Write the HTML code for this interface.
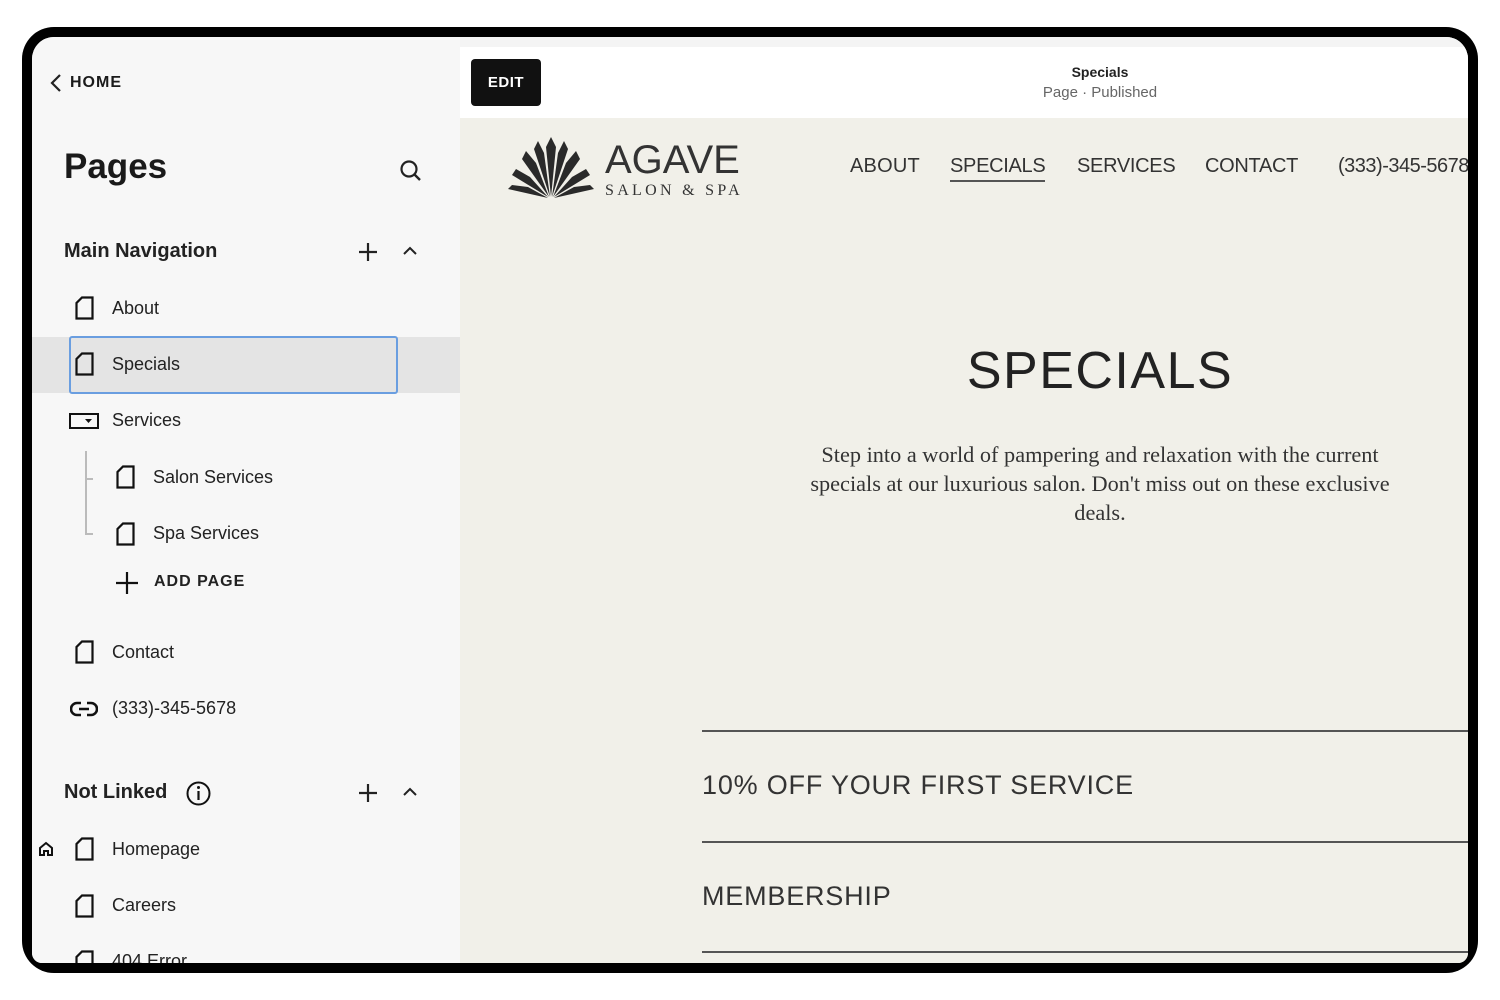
<!DOCTYPE html>
<html><head><meta charset="utf-8"><style>
*{margin:0;padding:0;box-sizing:border-box}
body{width:1500px;height:1000px;background:#fff;position:relative;overflow:hidden;font-family:"Liberation Sans",sans-serif;color:#1a1a1a}
.frame{position:absolute;left:22px;top:27px;width:1456px;height:946px;background:#000;border-radius:32px}
.inner{position:absolute;left:32px;top:37px;width:1436px;height:926px;border-radius:22px 22px 10px 10px;overflow:hidden;background:#f7f7f7}
.side{position:absolute;left:0;top:0;width:428px;height:926px;background:#f7f7f7}
.a{position:absolute;white-space:nowrap}
.item{font-size:18px;color:#222}
.right{position:absolute;left:428px;top:0;width:1008px;height:926px;background:#f1f0e9;overflow:hidden}
.top{position:absolute;left:0;top:10px;width:1008px;height:71px;background:#fff}
.pre{position:absolute;left:0;top:0;width:1008px;height:10px;background:#f4f4f4}
.line{position:absolute;left:242px;width:780px;height:2px;background:#555}
.acc{position:absolute;left:242px;font-size:27px;letter-spacing:0.8px;color:#333;white-space:nowrap}
.nav{position:absolute;top:118px;font-size:20px;color:#333;letter-spacing:.2px;white-space:nowrap}
</style></head><body>
<div class="frame"></div>
<div class="inner">
<div class="side">
 <svg class="a" style="left:17px;top:36px" width="14" height="20" viewBox="0 0 14 20"><path d="M11 2 L3 10 L11 18" fill="none" stroke="#222" stroke-width="2.2"/></svg>
 <div class="a" style="left:38px;top:37px;font-size:16px;font-weight:bold;letter-spacing:1px">HOME</div>
 <div class="a" style="left:32px;top:110px;font-size:35px;font-weight:bold">Pages</div>
 <svg class="a" style="left:367px;top:122px" width="24" height="24" viewBox="0 0 24 24"><circle cx="10" cy="10" r="7.5" fill="none" stroke="#222" stroke-width="2.2"/><path d="M15.5 15.5 L21 21" stroke="#222" stroke-width="2.4"/></svg>
 <div class="a" style="left:32px;top:203px;font-size:20px;font-weight:bold;color:#222">Main Navigation</div>
 <svg class="a" style="left:326px;top:205px" width="20" height="20"><path d="M10 1V19M1 10H19" stroke="#222" stroke-width="2.2"/></svg>
 <svg class="a" style="left:371px;top:209px" width="14" height="10"><path d="M1 8 L7 2 L13 8" fill="none" stroke="#222" stroke-width="2"/></svg>
 <div class="a" style="left:0;top:300px;width:428px;height:56px;background:#e4e4e4"></div>
 <div class="a" style="left:37px;top:299px;width:329px;height:58px;border:2px solid #6a9ee0;border-radius:3px"></div>
 <svg class="a" style="left:43px;top:259px" width="19" height="24"><path d="M7 1.5H17.5V22.5H1.5V7Z" fill="none" stroke="#111" stroke-width="2.2"/></svg>
 <div class="a item" style="left:80px;top:261px">About</div>
 <svg class="a" style="left:43px;top:315px" width="19" height="24"><path d="M7 1.5H17.5V22.5H1.5V7Z" fill="none" stroke="#111" stroke-width="2.2"/></svg>
 <div class="a item" style="left:80px;top:317px">Specials</div>
 <svg class="a" style="left:37px;top:376px" width="30" height="16"><rect x="1" y="1" width="28" height="14" fill="none" stroke="#111" stroke-width="2"/><path d="M16 6H23L19.5 10Z" fill="#111"/></svg>
 <div class="a item" style="left:80px;top:373px">Services</div>
 <div class="a" style="left:53px;top:414px;width:2px;height:84px;background:#bbb"></div>
 <div class="a" style="left:53px;top:441px;width:8px;height:2px;background:#bbb"></div>
 <div class="a" style="left:53px;top:496px;width:8px;height:2px;background:#bbb"></div>
 <svg class="a" style="left:84px;top:428px" width="19" height="24"><path d="M7 1.5H17.5V22.5H1.5V7Z" fill="none" stroke="#111" stroke-width="2.2"/></svg>
 <div class="a item" style="left:121px;top:430px">Salon Services</div>
 <svg class="a" style="left:84px;top:485px" width="19" height="24"><path d="M7 1.5H17.5V22.5H1.5V7Z" fill="none" stroke="#111" stroke-width="2.2"/></svg>
 <div class="a item" style="left:121px;top:486px">Spa Services</div>
 <svg class="a" style="left:84px;top:535px" width="22" height="22"><path d="M11 0V22M0 11H22" stroke="#111" stroke-width="2.2"/></svg>
 <div class="a" style="left:122px;top:536px;font-size:16px;font-weight:bold;letter-spacing:1px;color:#222">ADD PAGE</div>
 <svg class="a" style="left:43px;top:603px" width="19" height="24"><path d="M7 1.5H17.5V22.5H1.5V7Z" fill="none" stroke="#111" stroke-width="2.2"/></svg>
 <div class="a item" style="left:80px;top:605px">Contact</div>
 <svg class="a" style="left:38px;top:663px" width="28" height="18" viewBox="0 0 28 18"><path d="M11 3H7a6 6 0 0 0 0 12h4M17 3h4a6 6 0 0 1 0 12h-4M9 9H19" fill="none" stroke="#111" stroke-width="2.6"/></svg>
 <div class="a item" style="left:80px;top:661px">(333)-345-5678</div>
 <div class="a" style="left:32px;top:744px;font-size:20px;font-weight:bold;color:#222">Not Linked</div>
 <svg class="a" style="left:154px;top:744px" width="25" height="25"><circle cx="12.5" cy="12.5" r="11" fill="none" stroke="#111" stroke-width="2"/><path d="M12.5 10V19" stroke="#111" stroke-width="2.2"/><circle cx="12.5" cy="6.5" r="1.5" fill="#111"/></svg>
 <svg class="a" style="left:326px;top:746px" width="20" height="20"><path d="M10 1V19M1 10H19" stroke="#222" stroke-width="2.2"/></svg>
 <svg class="a" style="left:371px;top:750px" width="14" height="10"><path d="M1 8 L7 2 L13 8" fill="none" stroke="#222" stroke-width="2"/></svg>
 <svg class="a" style="left:6px;top:804px" width="16" height="16"><path d="M2 7L8 2L14 7V14H10V10H6V14H2Z" fill="none" stroke="#111" stroke-width="2"/></svg>
 <svg class="a" style="left:43px;top:800px" width="19" height="24"><path d="M7 1.5H17.5V22.5H1.5V7Z" fill="none" stroke="#111" stroke-width="2.2"/></svg>
 <div class="a item" style="left:80px;top:802px">Homepage</div>
 <svg class="a" style="left:43px;top:857px" width="19" height="24"><path d="M7 1.5H17.5V22.5H1.5V7Z" fill="none" stroke="#111" stroke-width="2.2"/></svg>
 <div class="a item" style="left:80px;top:858px">Careers</div>
 <svg class="a" style="left:43px;top:913px" width="19" height="24"><path d="M7 1.5H17.5V22.5H1.5V7Z" fill="none" stroke="#111" stroke-width="2.2"/></svg>
 <div class="a item" style="left:80px;top:914px">404 Error</div>
</div>
<div class="right">
 <div class="pre"></div>
 <div class="top">
  <div class="a" style="left:11px;top:12px;width:70px;height:47px;background:#111;border-radius:4px;color:#fff;font-size:15px;font-weight:bold;letter-spacing:.5px;text-align:center;line-height:47px">EDIT</div>
  <div class="a" style="left:0;width:1280px;top:17px;text-align:center;font-size:14px;font-weight:bold;color:#222">Specials</div>
  <div class="a" style="left:0;width:1280px;top:37px;text-align:center;font-size:15px;color:#666">Page · Published</div>
 </div>
 <svg class="a" style="left:48px;top:100px" width="86" height="62" viewBox="0 0 86 62">
  <g fill="#2a2a2a">
  <path d="M43 60 L38 10 L43 0 L48 10Z"/>
  <path d="M42 60 L26 12 L30 4 L36 16Z"/>
  <path d="M44 60 L50 16 L56 4 L60 12Z"/>
  <path d="M41 60 L14 22 L18 14 L28 26Z"/>
  <path d="M45 60 L58 26 L68 14 L72 22Z"/>
  <path d="M40 60 L4 38 L8 32 L22 40Z"/>
  <path d="M46 60 L64 40 L78 32 L82 38Z"/>
  <path d="M40 61 L0 52 L4 48 L20 50Z"/>
  <path d="M46 61 L66 50 L82 48 L86 52Z"/>
  </g></svg>
 <div class="a" style="left:145px;top:101px;font-size:40px;color:#333;letter-spacing:0px">AGAVE</div>
 <div class="a" style="left:145px;top:145px;font-size:16px;font-family:'Liberation Serif',serif;letter-spacing:3.3px;color:#333">SALON &amp; SPA</div>
 <div class="nav" style="left:390px">ABOUT</div>
 <div class="nav" style="left:490px;border-bottom:2px solid #555;padding-bottom:2px;letter-spacing:-.3px">SPECIALS</div>
 <div class="nav" style="left:617px;letter-spacing:-.3px">SERVICES</div>
 <div class="nav" style="left:745px;letter-spacing:-.3px">CONTACT</div>
 <div class="nav" style="left:878px;letter-spacing:-.5px">(333)-345-5678</div>
 <div class="a" style="left:300px;width:680px;top:304px;text-align:center;font-size:52px;letter-spacing:1.5px;color:#222">SPECIALS</div>
 <div class="a" style="left:290px;width:700px;top:403px;text-align:center;font-family:'Liberation Serif',serif;font-size:22.3px;line-height:29px;color:#333">Step into a world of pampering and relaxation with the current<br>specials at our luxurious salon. Don't miss out on these exclusive<br>deals.</div>
 <div class="line" style="top:693px"></div>
 <div class="acc" style="top:733px">10% OFF YOUR FIRST SERVICE</div>
 <div class="line" style="top:804px"></div>
 <div class="acc" style="top:844px">MEMBERSHIP</div>
 <div class="line" style="top:914px"></div>
</div>
</div>
</body></html>
